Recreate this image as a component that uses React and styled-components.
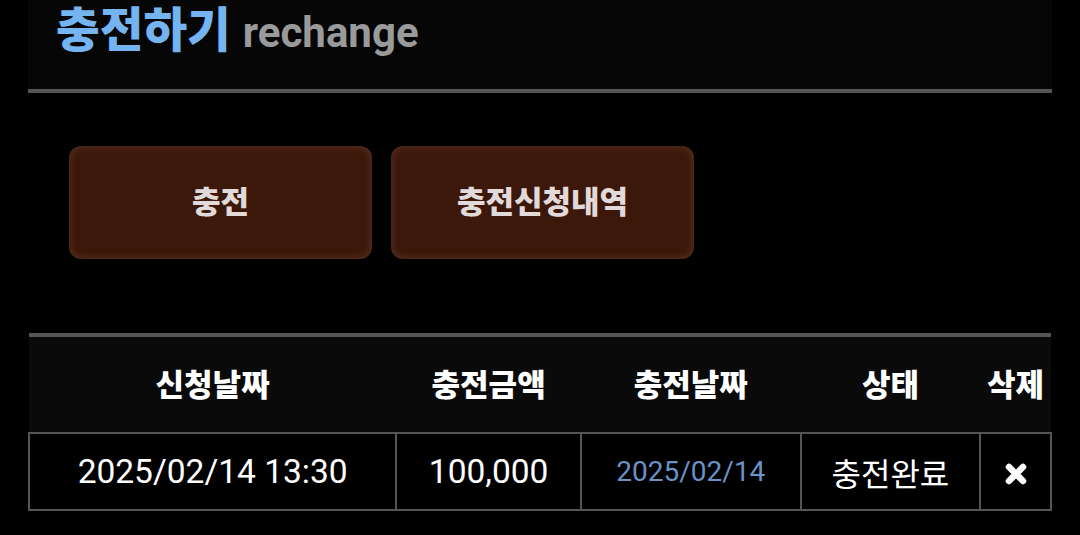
import React from 'react';
import styled, { createGlobalStyle } from 'styled-components';

const GlobalStyle = createGlobalStyle`
    body {
        margin: 0;
        background: #000;
        font-family: Roboto, "Noto Sans CJK KR", sans-serif;
    }
`

const Page = styled.div`
    width: 1024px;
    margin: 0 28px;
`

const Header = styled.div`
    height: 89px;
    background: #060606;
    border-bottom: 4px solid #555;
    display: flex;
    align-items: flex-start;
    padding-left: 28px;
    gap: 12px;
    box-sizing: content-box;
`

const Title = styled.h1`
    margin: 0;
    font-size: 47.5px;
    line-height: 62px;
    font-weight: 900;
    color: #74b4f0;
`

const Sub = styled.span`
    font-size: 42px;
    line-height: 66px;
    font-weight: 700;
    color: #9a9a9a;
`

const Buttons = styled.div`
    display: flex;
    gap: 19px;
    padding: 53px 41px 74px;
`

const Btn = styled.button`
    width: 303px;
    height: 113px;
    border: none;
    border-radius: 12px;
    background: #3c180a;
    box-shadow: inset 0 0 6px 2px rgba(110, 70, 55, 0.45);
    color: #e2dada;
    font-family: Roboto, "Noto Sans CJK KR", sans-serif;
    font-size: 31px;
    font-weight: 900;
    padding: 0 0 6px;
    cursor: pointer;
`

const Table = styled.table`
    width: 1024px;
    border-collapse: collapse;
    border-top: 4px solid #555;
`

const Th = styled.th`
    height: 91px;
    background: #0a0a0a;
    color: #fff;
    font-size: 31px;
    font-weight: 900;
    text-align: center;
    padding: 0 0 4px;
`

const Td = styled.td`
    height: 75px;
    border: 2px solid #555;
    color: ${p => p.blue ? '#6a92c6' : '#fff'};
    font-size: ${p => p.small ? '28px' : p.kr ? '32px' : '33.5px'};
    text-align: center;
    padding: 0;
`

const Close = () => (
    <svg width="24" height="24" viewBox="0 0 24 24" style={{ verticalAlign: 'middle' }}>
        <path d="M5 5 L19 19 M19 5 L5 19" stroke="#fff" strokeWidth="6.5" strokeLinecap="round" />
    </svg>
)

const cols = [368, 185, 220, 180, 71]

const App = () => {
    return (
        <>
            <GlobalStyle />
            <Page>
                <Header>
                    <Title>충전하기</Title>
                    <Sub>rechange</Sub>
                </Header>
                <Buttons>
                    <Btn>충전</Btn>
                    <Btn>충전신청내역</Btn>
                </Buttons>
                <Table>
                    <colgroup>
                        {cols.map((w, i) => <col key={i} style={{ width: w }} />)}
                    </colgroup>
                    <thead>
                        <tr>
                            <Th>신청날짜</Th>
                            <Th>충전금액</Th>
                            <Th>충전날짜</Th>
                            <Th>상태</Th>
                            <Th>삭제</Th>
                        </tr>
                    </thead>
                    <tbody>
                        <tr>
                            <Td>2025/02/14 13:30</Td>
                            <Td>100,000</Td>
                            <Td blue small>2025/02/14</Td>
                            <Td kr>충전완료</Td>
                            <Td><Close /></Td>
                        </tr>
                    </tbody>
                </Table>
            </Page>
        </>
    );
};

export default App;
